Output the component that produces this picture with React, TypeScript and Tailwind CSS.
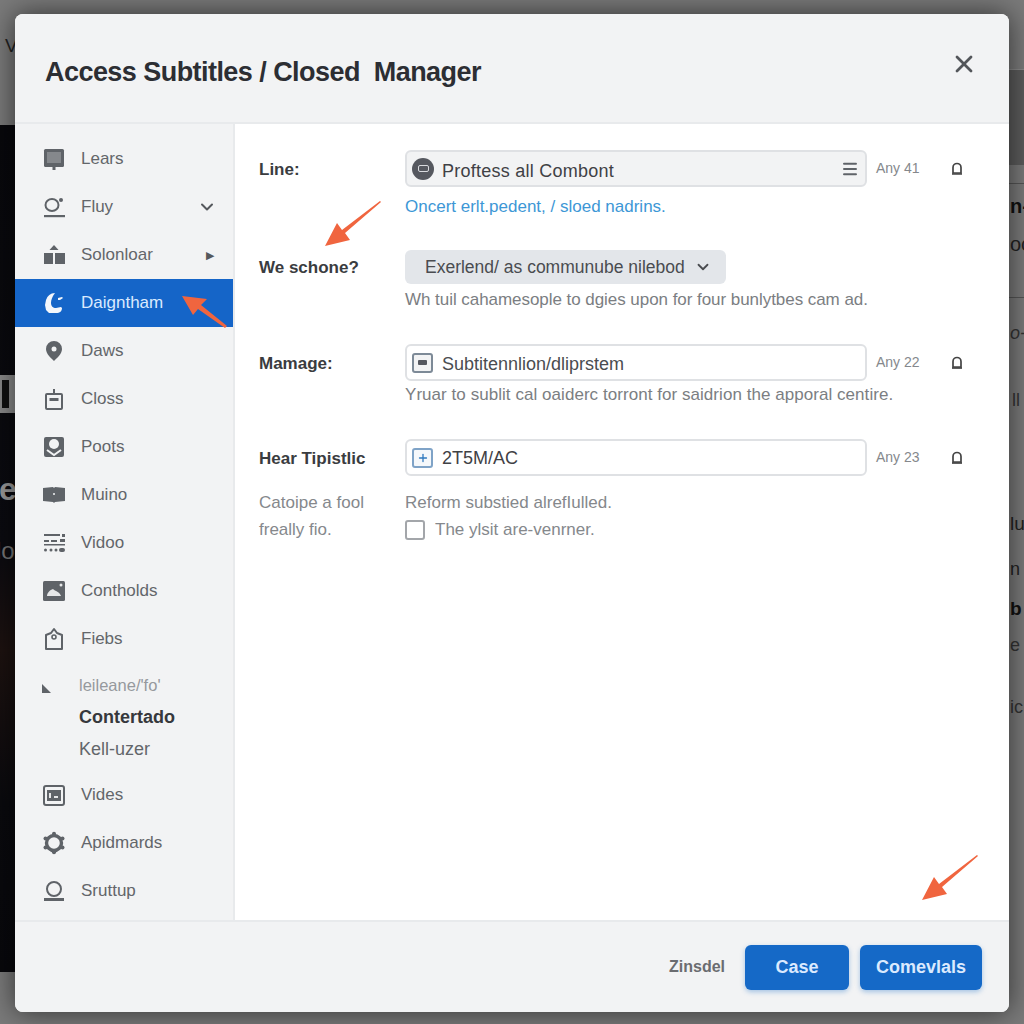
import { ChevronDown, Menu, Plus, X } from "lucide-react";
import type { ReactNode } from "react";

const font = { fontFamily: '"Liberation Sans", Arial, sans-serif' };

const Ico = ({ children }: { children: ReactNode }) => (
  <svg width="26" height="26" viewBox="0 0 26 26" fill="#5f6368" className="shrink-0">
    {children}
  </svg>
);

const icons: Record<string, ReactNode> = {
  learn: (
    <Ico>
      <rect x="3" y="3" width="20" height="18" rx="1.5" />
      <rect x="6" y="6" width="14" height="11" fill="#85888c" />
      <rect x="11.5" y="21" width="3" height="3" />
    </Ico>
  ),
  flow: (
    <Ico>
      <ellipse cx="11" cy="11" rx="6.5" ry="6" fill="none" stroke="#5f6368" strokeWidth="2" />
      <circle cx="20" cy="6" r="2" />
      <rect x="3" y="21" width="21" height="2.2" />
    </Ico>
  ),
  solo: (
    <Ico>
      <path d="M13 3l4.5 5h-9z" />
      <rect x="3" y="11" width="9" height="11" />
      <rect x="14" y="11" width="10" height="11" />
    </Ico>
  ),
  diagram: (
    <Ico>
      <path
        fill="#f3f6fb"
        d="M14 3a10 10 0 0 0-9 7l-1 5 1 5 3 3h7c4 0 6-2 6-5l-1-1-5 1c-3 0-5-2-5-5 0-3 1-6 4-10zM17 8l4-1 1 1-3 2h-2z"
      />
    </Ico>
  ),
  pin: (
    <Ico>
      <path d="M13 3a8 8 0 0 0-8 8c0 5 5 9 8 12 3-3 8-7 8-12a8 8 0 0 0-8-8z" />
      <circle cx="13" cy="11" r="2.5" fill="#f2f3f4" />
    </Ico>
  ),
  close: (
    <Ico>
      <rect x="5" y="8" width="16" height="15" rx="1" fill="none" stroke="#5f6368" strokeWidth="2" />
      <rect x="12" y="3" width="2" height="6" />
      <rect x="8.5" y="12" width="9" height="3" />
    </Ico>
  ),
  posts: (
    <Ico>
      <rect x="3" y="3" width="20" height="20" rx="2" />
      <circle cx="13" cy="10" r="5" fill="#f2f3f4" />
      <path d="M6 16l7 5 7-5" fill="none" stroke="#f2f3f4" strokeWidth="2" />
    </Ico>
  ),
  book: (
    <Ico>
      <path d="M2 6l10-1 1 1 1-1 10 1v13l-10 1-1 1-1-1-10-1z" />
      <circle cx="13" cy="12" r="1" fill="#f2f3f4" />
    </Ico>
  ),
  video: (
    <Ico>
      <rect x="3" y="4" width="16" height="2" />
      <rect x="21" y="4" width="3" height="3" />
      <rect x="3" y="10" width="5" height="2" />
      <rect x="10" y="10" width="6" height="2" />
      <rect x="19" y="9" width="5" height="3" />
      <rect x="3" y="14" width="21" height="1.5" />
      <circle cx="4.5" cy="20" r="1.5" />
      <circle cx="10" cy="20" r="1.5" />
      <circle cx="15" cy="20" r="1.5" />
      <rect x="18" y="18" width="6" height="4" rx="2" />
    </Ico>
  ),
  image: (
    <Ico>
      <rect x="2" y="3" width="22" height="20" rx="1.5" />
      <path d="M6 18c0-3 3-6 6-7 2 2 7 3 8 7z" fill="#e6e7e8" />
      <circle cx="20" cy="7" r="1.5" fill="#e6e7e8" />
    </Ico>
  ),
  tag: (
    <Ico>
      <path d="M5 9l5-2 3-4 3 4 5 2v14H5z" fill="none" stroke="#5f6368" strokeWidth="2" strokeLinejoin="round" />
      <circle cx="13" cy="11" r="2" fill="none" stroke="#5f6368" strokeWidth="1.6" />
    </Ico>
  ),
  vides: (
    <Ico>
      <rect x="3" y="4" width="20" height="19" rx="2" fill="none" stroke="#5f6368" strokeWidth="2" />
      <rect x="6" y="8" width="14" height="11" />
      <rect x="8" y="11" width="2" height="5" fill="#e6e7e8" />
      <rect x="13" y="14" width="4" height="2" fill="#e6e7e8" />
    </Ico>
  ),
  gear: (
    <Ico>
      <circle cx="13" cy="13" r="7.5" fill="none" stroke="#5f6368" strokeWidth="3.4" />
      <circle cx="13" cy="3.8" r="2" />
      <circle cx="13" cy="22.2" r="2" />
      <circle cx="4.5" cy="8.5" r="2" />
      <circle cx="21.5" cy="8.5" r="2" />
      <circle cx="4.5" cy="17.5" r="2" />
      <circle cx="21.5" cy="17.5" r="2" />
    </Ico>
  ),
  startup: (
    <Ico>
      <circle cx="13" cy="11" r="7" fill="none" stroke="#5f6368" strokeWidth="2" />
      <rect x="3" y="20" width="20" height="3" />
    </Ico>
  ),
};

const NavItem = ({
  icon,
  label,
  active,
  trailing,
}: {
  icon: string;
  label: string;
  active?: boolean;
  trailing?: ReactNode;
}) => (
  <div
    className={`flex h-12 items-center pl-[26px] pr-4 text-[17px] ${
      active ? "bg-[#1565c8] text-[#dbeafe]" : "text-[#63666a]"
    }`}
  >
    {icons[icon]}
    <span className="ml-[14px] flex-1">{label}</span>
    {trailing}
  </div>
);

const Bell = () => (
  <svg width="12" height="14" viewBox="0 0 12 14" fill="none" stroke="#444" strokeWidth="1.7">
    <path d="M2 11V5.5a4 4 0 0 1 8 0V11z" />
    <path d="M1 12h10" />
  </svg>
);

const Meta = ({ text }: { text: string }) => (
  <div className="flex w-[106px] items-center pl-[9px] text-[14px] text-[#85888c]">
    <span className="w-[75px]">{text}</span>
    <Bell />
  </div>
);

const Arrow = ({ className }: { className: string }) => (
  <svg width="60" height="48" viewBox="0 0 60 48" className={`absolute ${className}`}>
    <path d="M57 1L19 30l-5-7L2 46l25-6-5-7L58 2z" fill="#f0653f" />
  </svg>
);

const labelCls = "w-[146px] text-[17px] leading-[24px] font-bold text-[#3a3c40]";
const hintCls = "text-[17px] leading-[24px] text-[#7b7e82]";

export default function App() {
  return (
    <div className="relative h-[1024px] w-[1024px] overflow-hidden bg-[#7a7a7a]" style={font}>
      {/* page behind the dialog */}
      <div className="absolute left-0 top-[125px] h-[847px] w-[15px] bg-[linear-gradient(180deg,#08080c_0%,#0b0b10_50%,#1d1210_62%,#0a0a0e_80%,#08080c_100%)]" />
      <div className="absolute left-[1009px] top-[69px] h-[1px] w-[15px] bg-[#8a8a8a]" />
      <div className="absolute left-[1009px] top-[70px] h-[95px] w-[15px] bg-[#5c5c5c]" />
      <div className="absolute left-[1009px] top-[183px] h-[1px] w-[15px] bg-[#555]" />
      <div className="absolute left-[1009px] top-[297px] h-[1px] w-[15px] bg-[#555]" />
      <div className="absolute left-[5px] top-[32px] text-[19px] text-[#222]">V</div>
      <div className="absolute left-0 top-[375px] h-[38px] w-[15px] bg-[#8a8a8a]" />
      <div className="absolute left-[2px] top-[380px] h-[28px] w-[7px] bg-[#111]" />
      <div className="absolute left-[-1px] top-[465px] text-[32px] font-bold text-[#9a9a9a]">e</div>
      <div className="absolute left-[-4px] top-[533px] text-[24px] text-[#777]">lo</div>
      <div className="absolute left-[1010px] top-[191px] text-[20px] font-bold text-[#111]">n-</div>
      <div className="absolute left-[1010px] top-[229px] text-[20px] text-[#222]">oc</div>
      <div className="absolute left-[1010px] top-[320px] text-[18px] italic text-[#333]">o-</div>
      <div className="absolute left-[1012px] top-[387px] text-[18px] text-[#333]">ll</div>
      <div className="absolute left-[1010px] top-[510px] text-[19px] text-[#222]">lu</div>
      <div className="absolute left-[1010px] top-[556px] text-[18px] text-[#222]">n</div>
      <div className="absolute left-[1010px] top-[595px] text-[19px] font-bold text-[#111]">b</div>
      <div className="absolute left-[1010px] top-[632px] text-[18px] text-[#333]">e</div>
      <div className="absolute left-[1010px] top-[694px] text-[18px] text-[#333]">ic</div>

      {/* dialog */}
      <div className="absolute left-[15px] top-[14px] flex h-[998px] w-[994px] flex-col overflow-hidden rounded-lg bg-white shadow-[0_0_28px_rgba(0,0,0,0.6)]">
        <header className="flex h-[110px] shrink-0 items-center justify-between border-b-2 border-[#e8eaec] bg-[#f2f3f4] pl-[30px] pr-[31px] pt-[8px]">
          <h1 className="whitespace-pre text-[27px] font-bold tracking-[-0.55px] text-[#2c2e33]">
            Access Subtitles / Closed  Manager
          </h1>
          <X size={28} strokeWidth={2.4} color="#53565a" className="mb-4" />
        </header>

        <div className="flex min-h-0 flex-1">
          <aside className="w-[220px] shrink-0 border-r-2 border-[#e8eaec] bg-[#f2f3f4] pt-[11px]">
            <NavItem icon="learn" label="Lears" />
            <NavItem
              icon="flow"
              label="Fluy"
              trailing={<ChevronDown size={20} strokeWidth={2.4} color="#55585c" />}
            />
            <NavItem
              icon="solo"
              label="Solonloar"
              trailing={<span className="pr-[3px] text-[11px] text-[#55585c]">▶</span>}
            />
            <NavItem icon="diagram" label="Daigntham" active />
            <NavItem icon="pin" label="Daws" />
            <NavItem icon="close" label="Closs" />
            <NavItem icon="posts" label="Poots" />
            <NavItem icon="book" label="Muino" />
            <NavItem icon="video" label="Vidoo" />
            <NavItem icon="image" label="Contholds" />
            <NavItem icon="tag" label="Fiebs" />

            <div className="mb-[6px] mt-[7px] pl-[26px]">
              <div className="flex h-[31px] items-center">
                <svg width="12" height="12" viewBox="0 0 12 12" className="mt-1" fill="#5f6368">
                  <path d="M1 2l9 9H1z" />
                </svg>
                <span className="ml-[26px] text-[16.5px] text-[#96999d]">leileane/'fo'</span>
              </div>
              <div className="ml-[38px] flex h-8 items-center text-[18px] font-bold text-[#36383c]">
                Contertado
              </div>
              <div className="ml-[38px] flex h-8 items-center text-[18px] text-[#63666a]">
                Kell-uzer
              </div>
            </div>

            <NavItem icon="vides" label="Vides" />
            <NavItem icon="gear" label="Apidmards" />
            <NavItem icon="startup" label="Sruttup" />
          </aside>

          <main className="relative flex-1 bg-white pl-[24px] pr-[38px] pt-[26px]">
            <div className="flex">
              <div className={`${labelCls} pt-[8px]`}>Line:</div>
              <div>
                <div className="flex">
                  <div className="flex h-[37px] w-[462px] items-center rounded-md border-2 border-[#dfe1e4] bg-[#f2f3f4] pl-[5px] pr-[6px]">
                    <span className="flex h-[22px] w-[22px] items-center justify-center rounded-full bg-[#55585f]">
                      <span className="h-[7px] w-[11px] rounded-[2px] border border-[#d8dade]" />
                    </span>
                    <span className="ml-[8px] flex-1 pt-[5px] text-[18px] tracking-[0.25px] text-[#3f4145]">
                      Proftess all Combont
                    </span>
                    <Menu size={18} strokeWidth={2.6} color="#5f6368" />
                  </div>
                  <Meta text="Any 41" />
                </div>
                <p className="mt-[8px] text-[17px] leading-[24px] text-[#3d97d6]">
                  Oncert erlt.pedent, / sloed nadrins.
                </p>
              </div>
            </div>

            <div className="mt-[31px] flex">
              <div className={`${labelCls} pt-[6px]`}>We schone?</div>
              <div>
                <div className="flex h-[34px] w-[321px] items-center justify-between rounded-md bg-[#e3e6ea] pl-[20px] pr-[14px] text-[17.5px] text-[#4a4c50]">
                  <span>Exerlend/ as communube nilebod</span>
                  <ChevronDown size={18} strokeWidth={2.4} color="#4a4c50" />
                </div>
                <p className={`mt-[4px] ${hintCls} tracking-[-0.05px]`}>
                  Wh tuil cahamesople to dgies upon for four bunlytbes cam ad.
                </p>
              </div>
            </div>

            <div className="mt-[32px] flex">
              <div className={`${labelCls} pt-[8px]`}>Mamage:</div>
              <div>
                <div className="flex">
                  <div className="flex h-[37px] w-[462px] items-center rounded-md border-2 border-[#dfe1e4] bg-white pl-[5px]">
                    <span className="flex h-[20px] w-[21px] items-center justify-center rounded-[3px] border-2 border-[#7d8a97] bg-[#f2f3f4]">
                      <span className="h-[5px] w-[9px] rounded-[1px] bg-[#55585f]" />
                    </span>
                    <span className="ml-[9px] pt-[3px] text-[18px] text-[#4a4c50]">Subtitennlion/dliprstem</span>
                  </div>
                  <Meta text="Any 22" />
                </div>
                <p className={`mt-[2px] ${hintCls} tracking-[0.05px]`}>
                  Yruar to sublit cal oaiderc torront for saidrion the apporal centire.
                </p>
              </div>
            </div>

            <div className="mt-[32px] flex">
              <div className={`${labelCls} pt-[8px]`}>Hear Tipistlic</div>
              <div>
                <div className="flex">
                  <div className="flex h-[37px] w-[462px] items-center rounded-md border-2 border-[#dfe1e4] bg-white pl-[5px]">
                    <span className="flex h-[20px] w-[21px] items-center justify-center rounded-[3px] border-2 border-[#7fa3c7] bg-[#f5f8fb]">
                      <Plus size={12} strokeWidth={2.6} color="#2f79bf" />
                    </span>
                    <span className="ml-[9px] pt-[2px] text-[18px] text-[#3f4145]">2T5M/AC</span>
                  </div>
                  <Meta text="Any 23" />
                </div>
              </div>
            </div>

            <div className="mt-[13px] flex text-[17px] leading-[27px] text-[#85888c]">
              <div className="w-[146px]">
                Catoipe a fool
                <br />
                freally fio.
              </div>
              <div>
                <div>Reform substied alrefIulled.</div>
                <label className="flex items-center">
                  <span className="h-[20px] w-[20px] rounded-[3px] border-2 border-[#a3a6aa] bg-white" />
                  <span className="ml-[10px]">The ylsit are-venrner.</span>
                </label>
              </div>
            </div>
          </main>
        </div>

        <footer className="flex h-[92px] shrink-0 items-center justify-end border-t-2 border-[#e8eaec] bg-[#f2f3f4] pr-[27px]">
          <span className="mr-[20px] text-[16px] font-bold text-[#6a6c70]">Zinsdel</span>
          <button className="h-[45px] w-[104px] rounded-md bg-[#1569c7] text-[18px] font-bold text-[#dbeafe] shadow-[0_2px_5px_rgba(21,105,199,0.35)]">
            Case
          </button>
          <button className="ml-[11px] h-[45px] w-[122px] rounded-md bg-[#1569c7] text-[18px] font-bold text-[#dbeafe] shadow-[0_2px_5px_rgba(21,105,199,0.35)]">
            Comevlals
          </button>
        </footer>
      </div>

      {/* callout arrows over the dialog */}
      <Arrow className="left-[323px] top-[200px]" />
      <Arrow className="left-[920px] top-[854px]" />
      <svg width="48" height="34" viewBox="0 0 48 34" className="absolute left-[181px] top-[295px]">
        <path d="M1 1l25 3-6 6 26 21-2 2-27-19-5 6z" fill="#f0653f" />
      </svg>
    </div>
  );
}
